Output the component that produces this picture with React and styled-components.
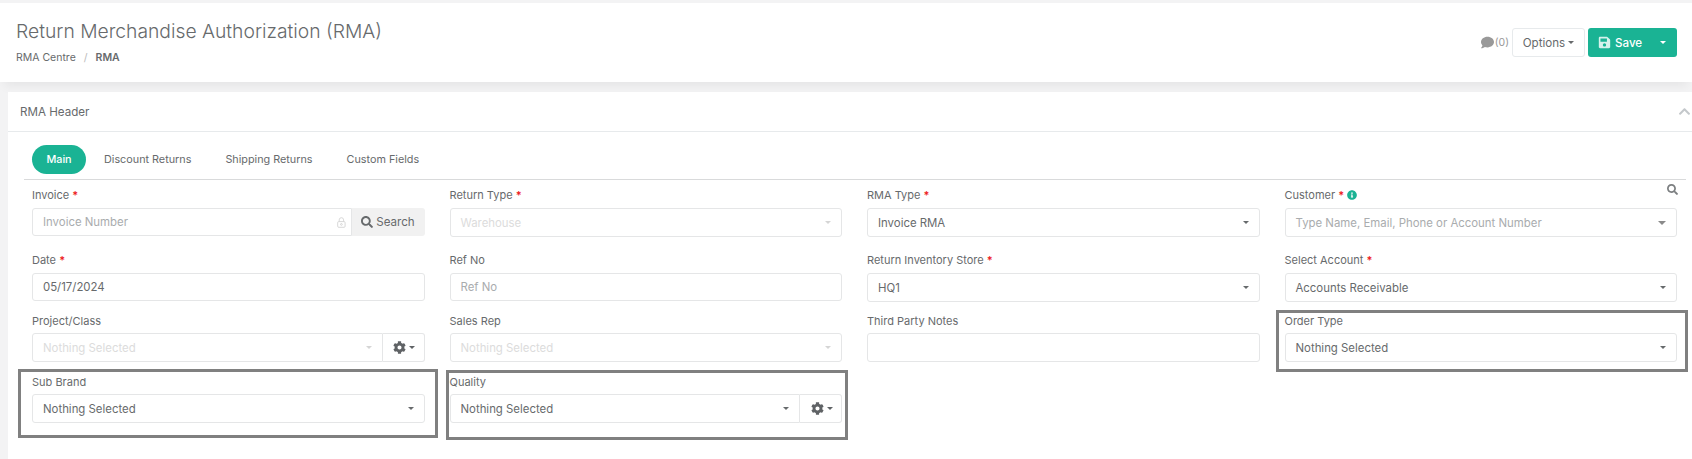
import React from "react";
import styled, { createGlobalStyle } from "styled-components";
import { FaComment, FaCog, FaSearch, FaInfoCircle, FaChevronUp, FaSave } from "react-icons/fa";

const GlobalStyle = createGlobalStyle`
  html, body {
    margin: 0;
    padding: 0;
    background: #f3f3f4;
    font-family: "Inter", "Roboto", sans-serif;
    color: #676a6c;
  }
  * { box-sizing: border-box; }
`;

const Page = styled.div`
  width: 1692px;
  height: 459px;
  overflow: hidden;
  padding-top: 3px;
  background: #f3f3f4;
`;

const PageHeader = styled.header`
  height: 79px;
  background: #fff;
  display: flex;
  justify-content: space-between;
  padding: 0 15px 0 16px;
  box-shadow: 0 8px 10px -4px rgba(0, 0, 0, 0.06);
`;

const TitleBlock = styled.div`
  padding-top: 16px;
`;

const Title = styled.h2`
  margin: 0;
  font-size: 19.3px;
  line-height: 24px;
  font-weight: 300;
  color: #676a6c;
`;

const Crumbs = styled.div`
  margin-top: 8px;
  font-size: 10.5px;
  line-height: 14px;
  color: #676a6c;
  b { font-weight: 600; }
  i { font-style: normal; color: #bbb; margin: 0 8px; }
`;

const HeaderActions = styled.div`
  display: flex;
  align-items: flex-start;
  padding-top: 25px;
`;

const Comments = styled.span`
  display: flex;
  align-items: center;
  gap: 1px;
  height: 29px;
  margin-right: 3px;
  font-size: 10.5px;
  color: #999;
  svg { font-size: 13px; }
`;

const OptionsButton = styled.button`
  height: 29px;
  width: 73px;
  margin-right: 3px;
  background: #fff;
  border: 1px solid #e7eaec;
  border-radius: 3px;
  font: inherit;
  font-size: 11.6px;
  color: #676a6c;
  display: flex;
  align-items: center;
  justify-content: center;
  gap: 3px;
`;

const Caret = styled.span`
  display: inline-block;
  flex: none;
  width: 0;
  height: 0;
  border-left: ${(p) => p.$size || 3}px solid transparent;
  border-right: ${(p) => p.$size || 3}px solid transparent;
  border-top: ${(p) => p.$size || 3}px solid ${(p) => p.$color || "#676a6c"};
`;

const SaveButton = styled.button`
  height: 29px;
  width: 89px;
  background: #1ab394;
  border: 0;
  border-radius: 3px;
  padding: 0 11px 0 10px;
  font: inherit;
  font-size: 11.6px;
  font-weight: 500;
  color: #fff;
  display: flex;
  align-items: center;
  svg { font-size: 13px; margin-right: 4px; color: #d6f2ec; }
  span:last-child { margin-left: auto; }
`;

const Panel = styled.section`
  margin: 10px 0 0 8px;
  height: 367px;
  background: #fff;
`;

const PanelTitle = styled.div`
  height: 40px;
  display: flex;
  align-items: center;
  justify-content: space-between;
  padding: 0 1px 0 12px;
  border-bottom: 1px solid #e7eaec;
  font-size: 11.6px;
  color: #676a6c;
  svg { color: #c4c8cb; font-size: 13px; }
`;

const PanelBody = styled.div`
  padding: 13px 6px 0 16px;
`;

const Tabs = styled.nav`
  display: flex;
  height: 35px;
  padding: 0 0 5px 8px;
  border-bottom: 1px solid #d9dadb;
  font-size: 10.8px;
`;

const Tab = styled.span`
  display: flex;
  align-items: center;
  justify-content: center;
  height: 29px;
  border-radius: 15px;
  margin-right: ${(p) => (p.$active ? "18px" : "34px")};
  width: ${(p) => (p.$active ? "54px" : "auto")};
  background: ${(p) => (p.$active ? "#1ab394" : "transparent")};
  color: ${(p) => (p.$active ? "#fff" : "#676a6c")};
  font-weight: ${(p) => (p.$active ? 500 : 400)};
`;

const FieldGrid = styled.div`
  display: grid;
  grid-template-columns: repeat(4, 392.5px);
  column-gap: 25px;
  padding: 9px 0 0 8px;
`;

const Field = styled.div`
  position: relative;
  height: ${(p) => p.$height || 61}px;
`;

const Label = styled.label`
  display: block;
  height: 13px;
  margin-bottom: ${(p) => p.$gap || 6}px;
  font-size: 11px;
  line-height: 13px;
  color: #676a6c;
  em { font-style: normal; color: #ed1c24; font-weight: 600; }
  svg { color: #1ab394; font-size: 10px; margin-left: 3px; vertical-align: -1px; }
`;

const Group = styled.div`
  display: flex;
  height: ${(p) => (p.$tall ? 29 : 28)}px;
`;

const Control = styled.div`
  flex: 1;
  min-width: 0;
  display: flex;
  align-items: center;
  justify-content: space-between;
  padding: 0 10px;
  background: #fff;
  border: 1px solid #e5e6e7;
  border-radius: ${(p) => (p.$joined ? "3px 0 0 3px" : "3px")};
  font-size: 11.4px;
  color: ${(p) => (p.$muted ? "#dcdcdc" : p.$hint ? "#a9acae" : "#676a6c")};
`;

const SearchAddon = styled.div`
  width: 73px;
  display: flex;
  align-items: center;
  justify-content: center;
  gap: 3px;
  background: #f1f1f1;
  border-radius: 0 3px 3px 0;
  font-size: 11.6px;
  color: #676a6c;
  svg { font-size: 12px; }
`;

const GearAddon = styled.div`
  width: 42px;
  display: flex;
  align-items: center;
  justify-content: center;
  gap: 3px;
  padding-left: 2px;
  border: 1px solid #e5e6e7;
  border-left: 0;
  border-radius: 0 3px 3px 0;
  color: #5f6265;
  svg { font-size: 13px; }
`;

const CornerSearch = styled.span`
  position: absolute;
  top: -5px;
  right: -1px;
  font-size: 11px;
  color: #7c7f81;
`;

// grey annotation frames drawn over the screenshot
const Highlight = styled.div`
  position: absolute;
  top: ${(p) => p.$top}px;
  left: ${(p) => p.$left}px;
  right: ${(p) => p.$right}px;
  height: ${(p) => p.$h}px;
  border: 3px solid #808080;
  pointer-events: none;
`;

const LockGlyph = styled.svg`
  margin-right: -5px;
`;

const LockIcon = () => (
  <LockGlyph width="9" height="11" viewBox="0 0 9 11" fill="none" stroke="#d4d4d4" strokeWidth="0.9">
    <path d="M2.2 4.6V2.9a2.2 2.2 0 0 1 4.4 0v1.7" />
    <rect x="0.7" y="4.6" width="7.4" height="5.7" rx="1" />
    <circle cx="4.4" cy="7.4" r="0.9" />
  </LockGlyph>
);

const GearButton = () => (
  <GearAddon>
    <FaCog />
    <Caret $color="#5f6265" />
  </GearAddon>
);

const App = () => (
  <Page>
    <GlobalStyle />
    <PageHeader>
      <TitleBlock>
        <Title>Return Merchandise Authorization (RMA)</Title>
        <Crumbs>
          RMA Centre<i>/</i><b>RMA</b>
        </Crumbs>
      </TitleBlock>
      <HeaderActions>
        <Comments>
          <FaComment /> (0)
        </Comments>
        <OptionsButton>
          Options <Caret />
        </OptionsButton>
        <SaveButton>
          <FaSave /> Save <Caret $color="#fff" />
        </SaveButton>
      </HeaderActions>
    </PageHeader>
    <Panel>
      <PanelTitle>
        RMA Header
        <FaChevronUp />
      </PanelTitle>
      <PanelBody>
        <Tabs>
          <Tab $active>Main</Tab>
          <Tab>Discount Returns</Tab>
          <Tab>Shipping Returns</Tab>
          <Tab>Custom Fields</Tab>
        </Tabs>
        <FieldGrid>
          <Field $height={65}>
            <Label>Invoice <em>*</em></Label>
            <Group>
              <Control $joined $hint>
                Invoice Number
                <LockIcon />
              </Control>
              <SearchAddon><FaSearch /> Search</SearchAddon>
            </Group>
          </Field>
          <Field $height={65}>
            <Label>Return Type <em>*</em></Label>
            <Group $tall>
              <Control $muted>Warehouse <Caret $color="#d5d5d5" /></Control>
            </Group>
          </Field>
          <Field $height={65}>
            <Label>RMA Type <em>*</em></Label>
            <Group $tall>
              <Control>Invoice RMA <Caret /></Control>
            </Group>
          </Field>
          <Field $height={65}>
            <Label>Customer <em>*</em><FaInfoCircle /></Label>
            <CornerSearch><FaSearch /></CornerSearch>
            <Group $tall>
              <Control $hint>Type Name, Email, Phone or Account Number <Caret $size={4} $color="#8a8a8a" /></Control>
            </Group>
          </Field>

          <Field>
            <Label>Date <em>*</em></Label>
            <Group><Control>05/17/2024</Control></Group>
          </Field>
          <Field>
            <Label>Ref No</Label>
            <Group><Control $hint>Ref No</Control></Group>
          </Field>
          <Field>
            <Label>Return Inventory Store <em>*</em></Label>
            <Group $tall><Control>HQ1 <Caret /></Control></Group>
          </Field>
          <Field>
            <Label>Select Account <em>*</em></Label>
            <Group $tall><Control>Accounts Receivable <Caret /></Control></Group>
          </Field>

          <Field>
            <Label $gap={5}>Project/Class</Label>
            <Group $tall>
              <Control $joined $muted>Nothing Selected <Caret $color="#d5d5d5" /></Control>
              <GearButton />
            </Group>
          </Field>
          <Field>
            <Label $gap={5}>Sales Rep</Label>
            <Group $tall><Control $muted>Nothing Selected <Caret $color="#d5d5d5" /></Control></Group>
          </Field>
          <Field>
            <Label $gap={5}>Third Party Notes</Label>
            <Group $tall><Control /></Group>
          </Field>
          <Field>
            <Label $gap={5}>Order Type</Label>
            <Group $tall><Control>Nothing Selected <Caret /></Control></Group>
            <Highlight $top={-5} $left={-9} $right={-11} $h={62} />
          </Field>

          <Field>
            <Label $gap={5}>Sub Brand</Label>
            <Group $tall><Control>Nothing Selected <Caret /></Control></Group>
            <Highlight $top={-7} $left={-14} $right={-13} $h={69} />
          </Field>
          <Field>
            <Label $gap={5}>Quality</Label>
            <Group $tall>
              <Control $joined>Nothing Selected <Caret /></Control>
              <GearButton />
            </Group>
            <Highlight $top={-6} $left={-4} $right={-6} $h={70} />
          </Field>
        </FieldGrid>
      </PanelBody>
    </Panel>
  </Page>
);

export default App;
